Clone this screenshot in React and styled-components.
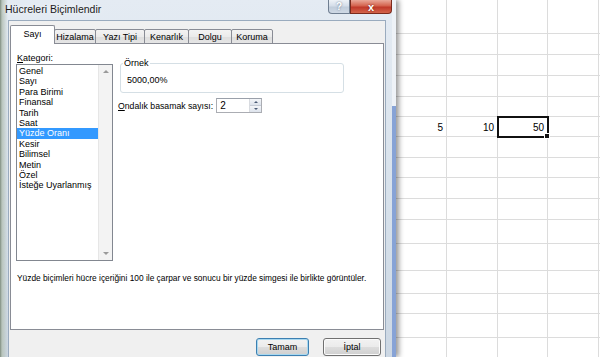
import React from "react";
import styled, { createGlobalStyle } from "styled-components";

const GlobalStyle = createGlobalStyle`
  html, body {
    margin: 0;
    padding: 0;
    background: #fff;
  }
  body {
    font-family: "Liberation Sans", Arial, sans-serif;
    overflow: hidden;
  }
`;

const categories = [
  "Genel",
  "Sayı",
  "Para Birimi",
  "Finansal",
  "Tarih",
  "Saat",
  "Yüzde Oranı",
  "Kesir",
  "Bilimsel",
  "Metin",
  "Özel",
  "İsteğe Uyarlanmış",
];

const tabs = [
  { label: "Sayı", w: 45 },
  { label: "Hizalama", w: 42 },
  { label: "Yazı Tipi", w: 50 },
  { label: "Kenarlık", w: 45 },
  { label: "Dolgu", w: 44 },
  { label: "Koruma", w: 42 },
];

const colWidths = [51, 51, 50, 51];
const rowHeights = [34, 21, 21, 21, 20, 20, 21, 20, 21, 21, 24, 27, 23, 20, 24, 21];
const cellValues = { "5-0": "5", "5-1": "10", "5-2": "50" };
const selectedCell = "5-2";

const Screen = styled.div`
  display: flex;
  width: 600px;
  height: 357px;
  overflow: hidden;
  background: #fff;
`;

const Window = styled.div`
  position: relative;
  z-index: 2;
  flex: 0 0 396px;
  box-sizing: border-box;
  display: flex;
  flex-direction: column;
  border-right: 4px solid;
  border-image: linear-gradient(to bottom, #eef2f7 0, #eef2f7 106px, #87a3d6 106px) 1;
  background:
    linear-gradient(to right, #7f8d80 0, #b9c5bd 2px, rgba(220, 229, 238, 0) 8px),
    linear-gradient(to bottom, #e4ebf3 0, #d6e0ea 60%, #ccd7e3 100%);
  box-shadow: 3px 0 5px rgba(0, 0, 0, 0.4);
`;

const TitleBar = styled.div`
  display: flex;
  align-items: flex-start;
  height: 20px;
  padding-left: 5px;
`;

const Title = styled.div`
  margin-top: 3px;
  font-size: 10.5px;
  line-height: 13px;
  color: #1b1b1b;
  text-shadow: 0 0 6px #fff;
`;

const Controls = styled.div`
  display: flex;
  margin-left: auto;
`;

const CaptionButton = styled.div`
  box-sizing: border-box;
  display: flex;
  align-items: center;
  justify-content: center;
  height: 14px;
  width: ${(p) => p.$w}px;
  border: 1px solid ${(p) => (p.$danger ? "#7a2a1c" : "#6f7e91")};
  border-top: none;
  border-radius: ${(p) => (p.$danger ? "0 0 4px 0" : "0 0 0 4px")};
  background: ${(p) =>
    p.$danger
      ? "linear-gradient(to bottom, #e9a899 0, #d4634e 45%, #c0392a 55%, #d3644a 100%)"
      : "linear-gradient(to bottom, #eef2f7 0, #d5dee9 45%, #c1cddb 55%, #cfd9e5 100%)"};
  color: #fff;
  font-size: ${(p) => (p.$danger ? 11 : 10)}px;
  font-weight: bold;
  text-shadow: 0 0 2px ${(p) => (p.$danger ? "#6d1c10" : "#5a6b80")};
`;

const Body = styled.div`
  flex: 1;
  display: flex;
  flex-direction: column;
  margin: 0 6px 0 8px;
  padding: 4px 1px 0 1px;
  background: #f0f0f0;
  border: 1px solid #9aabbe;
  border-bottom: none;
`;

const TabStrip = styled.div`
  position: relative;
  z-index: 1;
  display: flex;
  align-items: flex-end;
  height: 19px;
  margin-bottom: -1px;
`;

const Tab = styled.div`
  box-sizing: border-box;
  display: flex;
  align-items: center;
  justify-content: center;
  width: ${(p) => p.$w}px;
  height: ${(p) => (p.$active ? 19 : 15)}px;
  margin-left: ${(p) => (p.$first ? 0 : -1)}px;
  border: 1px solid #898c95;
  border-bottom: ${(p) => (p.$active ? "none" : "1px solid #898c95")};
  border-radius: 2px 2px 0 0;
  background: ${(p) =>
    p.$active ? "#fff" : "linear-gradient(to bottom, #f3f3f3 0, #ebebeb 50%, #dedede 51%, #e5e5e5 100%)"};
  font-size: 9px;
  color: #000;
  padding-bottom: ${(p) => (p.$active ? 2 : 0)}px;
`;

const Panel = styled.div`
  box-sizing: border-box;
  height: 287px;
  padding: 9px 5px 0 5px;
  background: #fff;
  border: 1px solid #898c95;
  font-size: 9px;
  color: #000;
`;

const Top = styled.div`
  display: flex;
  gap: 5px;
`;

const LeftColumn = styled.div`
  display: flex;
  flex-direction: column;
`;

const Label = styled.div`
  font-size: 9px;
  line-height: 11px;
  padding-left: 1px;
`;

const Key = styled.span`
  text-decoration: underline;
`;

const ListBox = styled.div`
  box-sizing: border-box;
  display: flex;
  width: 97px;
  height: 197px;
  border: 1px solid #828790;
  background: #fff;
`;

const Items = styled.div`
  flex: 1;
  padding-top: 1px;
`;

const Item = styled.div`
  height: 10.4px;
  line-height: 10.4px;
  padding-left: 2px;
  white-space: nowrap;
  background: ${(p) => (p.$selected ? "#3399ff" : "transparent")};
  color: ${(p) => (p.$selected ? "#fff" : "#000")};
`;

const ScrollBar = styled.div`
  display: flex;
  flex-direction: column;
  justify-content: space-between;
  align-items: center;
  width: 14px;
  padding: 5px 0 5px;
  box-sizing: border-box;
  background: #f3f3f3;
  border-left: 1px solid #e6e6e6;
`;

const Arrow = styled.span`
  width: 0;
  height: 0;
  border-left: 3px solid transparent;
  border-right: 3px solid transparent;
  ${(p) => (p.$down ? "border-top: 3px solid #9a9a9a;" : "border-bottom: 3px solid #9a9a9a;")}
`;

const RightColumn = styled.div`
  display: flex;
  flex-direction: column;
`;

const GroupBox = styled.fieldset`
  width: 224px;
  box-sizing: border-box;
  margin: 5px 0 0 2px;
  padding: 0 0 6px 2px;
  border: 1px solid #d5dfe5;
  border-radius: 3px;
`;

const Legend = styled.legend`
  padding: 0 1px;
  font-size: 9px;
  line-height: 11px;
`;

const Sample = styled.div`
  margin: 6px 0 0 4px;
  font-size: 9px;
  line-height: 11px;
`;

const DecimalRow = styled.div`
  display: flex;
  align-items: center;
  gap: 3px;
  margin-top: 5px;
`;

const DecimalLabel = styled.div`
  font-size: 8.7px;
  white-space: nowrap;
`;

const SpinBox = styled.div`
  box-sizing: border-box;
  display: flex;
  width: 46px;
  height: 15px;
  border: 1px solid #abadb3;
  border-top-color: #9aa0aa;
  background: #fff;
`;

const SpinValue = styled.div`
  flex: 1;
  padding-left: 3px;
  font-size: 10px;
  line-height: 13px;
`;

const SpinButtons = styled.div`
  display: flex;
  flex-direction: column;
  width: 11px;
  border-left: 1px solid #d8dbe0;
`;

const SpinHalf = styled.div`
  flex: 1;
  display: flex;
  align-items: center;
  justify-content: center;
  background: linear-gradient(to bottom, #f4f6f9, #dde3ec);
  border-bottom: ${(p) => (p.$top ? "1px solid #c6ccd6" : "none")};
`;

const SpinArrow = styled.span`
  width: 0;
  height: 0;
  border-left: 2px solid transparent;
  border-right: 2px solid transparent;
  ${(p) => (p.$down ? "border-top: 2px solid #4a5b75;" : "border-bottom: 2px solid #4a5b75;")}
`;

const Description = styled.div`
  margin-top: 12px;
  font-size: 8.35px;
  line-height: 11px;
  padding-left: 1px;
  white-space: nowrap;
`;

const ButtonRow = styled.div`
  display: flex;
  justify-content: flex-end;
  gap: 14px;
  margin-top: 8px;
  padding-right: 3px;
`;

const Button = styled.div`
  box-sizing: border-box;
  display: flex;
  align-items: center;
  justify-content: center;
  width: ${(p) => p.$w}px;
  height: 18px;
  border: 1px solid ${(p) => (p.$default ? "#3c7fb1" : "#707070")};
  border-radius: 3px;
  background: linear-gradient(to bottom, #f2f2f2 0, #ebebeb 50%, #dddddd 51%, #cfcfcf 100%);
  box-shadow: ${(p) => (p.$default ? "inset 0 0 0 1px #a8d8f0" : "inset 0 0 0 1px #fbfbfb")};
  font-size: 9px;
  color: #000;
`;

const Sheet = styled.div`
  flex: 1;
  display: grid;
  grid-template-columns: ${colWidths.map((w) => `${w}px`).join(" ")} 1fr;
  grid-template-rows: ${rowHeights.map((h) => `${h}px`).join(" ")};
  background: #fff;
`;

const Cell = styled.div`
  position: relative;
  box-sizing: border-box;
  display: flex;
  align-items: center;
  justify-content: flex-end;
  padding: 2px 3px 0 0;
  border-right: 1px solid #dcdcdc;
  border-bottom: 1px solid #dcdcdc;
  font-size: 10px;
  color: #000;
  ${(p) =>
    p.$selected &&
    `
    outline: 2px solid #111;
    outline-offset: -1px;
    z-index: 1;
    &::after {
      content: "";
      position: absolute;
      right: -3px;
      bottom: -3px;
      width: 4px;
      height: 4px;
      background: #111;
      border: 1px solid #fff;
    }
  `}
`;

export default function App() {
  return (
    <>
      <GlobalStyle />
      <Screen>
        <Window>
          <TitleBar>
            <Title>Hücreleri Biçimlendir</Title>
            <Controls>
              <CaptionButton $w={22}>?</CaptionButton>
              <CaptionButton $w={42} $danger>
                x
              </CaptionButton>
            </Controls>
          </TitleBar>
          <Body>
            <TabStrip>
              {tabs.map((t, i) => (
                <Tab key={t.label} $w={t.w} $active={i === 0} $first={i === 0}>
                  {t.label}
                </Tab>
              ))}
            </TabStrip>
            <Panel>
              <Top>
                <LeftColumn>
                  <Label>
                    <Key>K</Key>ategori:
                  </Label>
                  <ListBox>
                    <Items>
                      {categories.map((c) => (
                        <Item key={c} $selected={c === "Yüzde Oranı"}>
                          {c}
                        </Item>
                      ))}
                    </Items>
                    <ScrollBar>
                      <Arrow />
                      <Arrow $down />
                    </ScrollBar>
                  </ListBox>
                </LeftColumn>
                <RightColumn>
                  <GroupBox>
                    <Legend>Örnek</Legend>
                    <Sample>5000,00%</Sample>
                  </GroupBox>
                  <DecimalRow>
                    <DecimalLabel>
                      <Key>O</Key>ndalık basamak sayısı:
                    </DecimalLabel>
                    <SpinBox>
                      <SpinValue>2</SpinValue>
                      <SpinButtons>
                        <SpinHalf $top>
                          <SpinArrow />
                        </SpinHalf>
                        <SpinHalf>
                          <SpinArrow $down />
                        </SpinHalf>
                      </SpinButtons>
                    </SpinBox>
                  </DecimalRow>
                </RightColumn>
              </Top>
              <Description>
                Yüzde biçimleri hücre içeriğini 100 ile çarpar ve sonucu bir yüzde simgesi ile birlikte
                görüntüler.
              </Description>
            </Panel>
            <ButtonRow>
              <Button $w={53} $default>
                Tamam
              </Button>
              <Button $w={58}>İptal</Button>
            </ButtonRow>
          </Body>
        </Window>
        <Sheet>
          {rowHeights.map((_, r) =>
            [0, 1, 2, 3, 4].map((c) => {
              const key = `${r}-${c}`;
              return (
                <Cell key={key} $selected={key === selectedCell}>
                  {cellValues[key] || ""}
                </Cell>
              );
            })
          )}
        </Sheet>
      </Screen>
    </>
  );
}
